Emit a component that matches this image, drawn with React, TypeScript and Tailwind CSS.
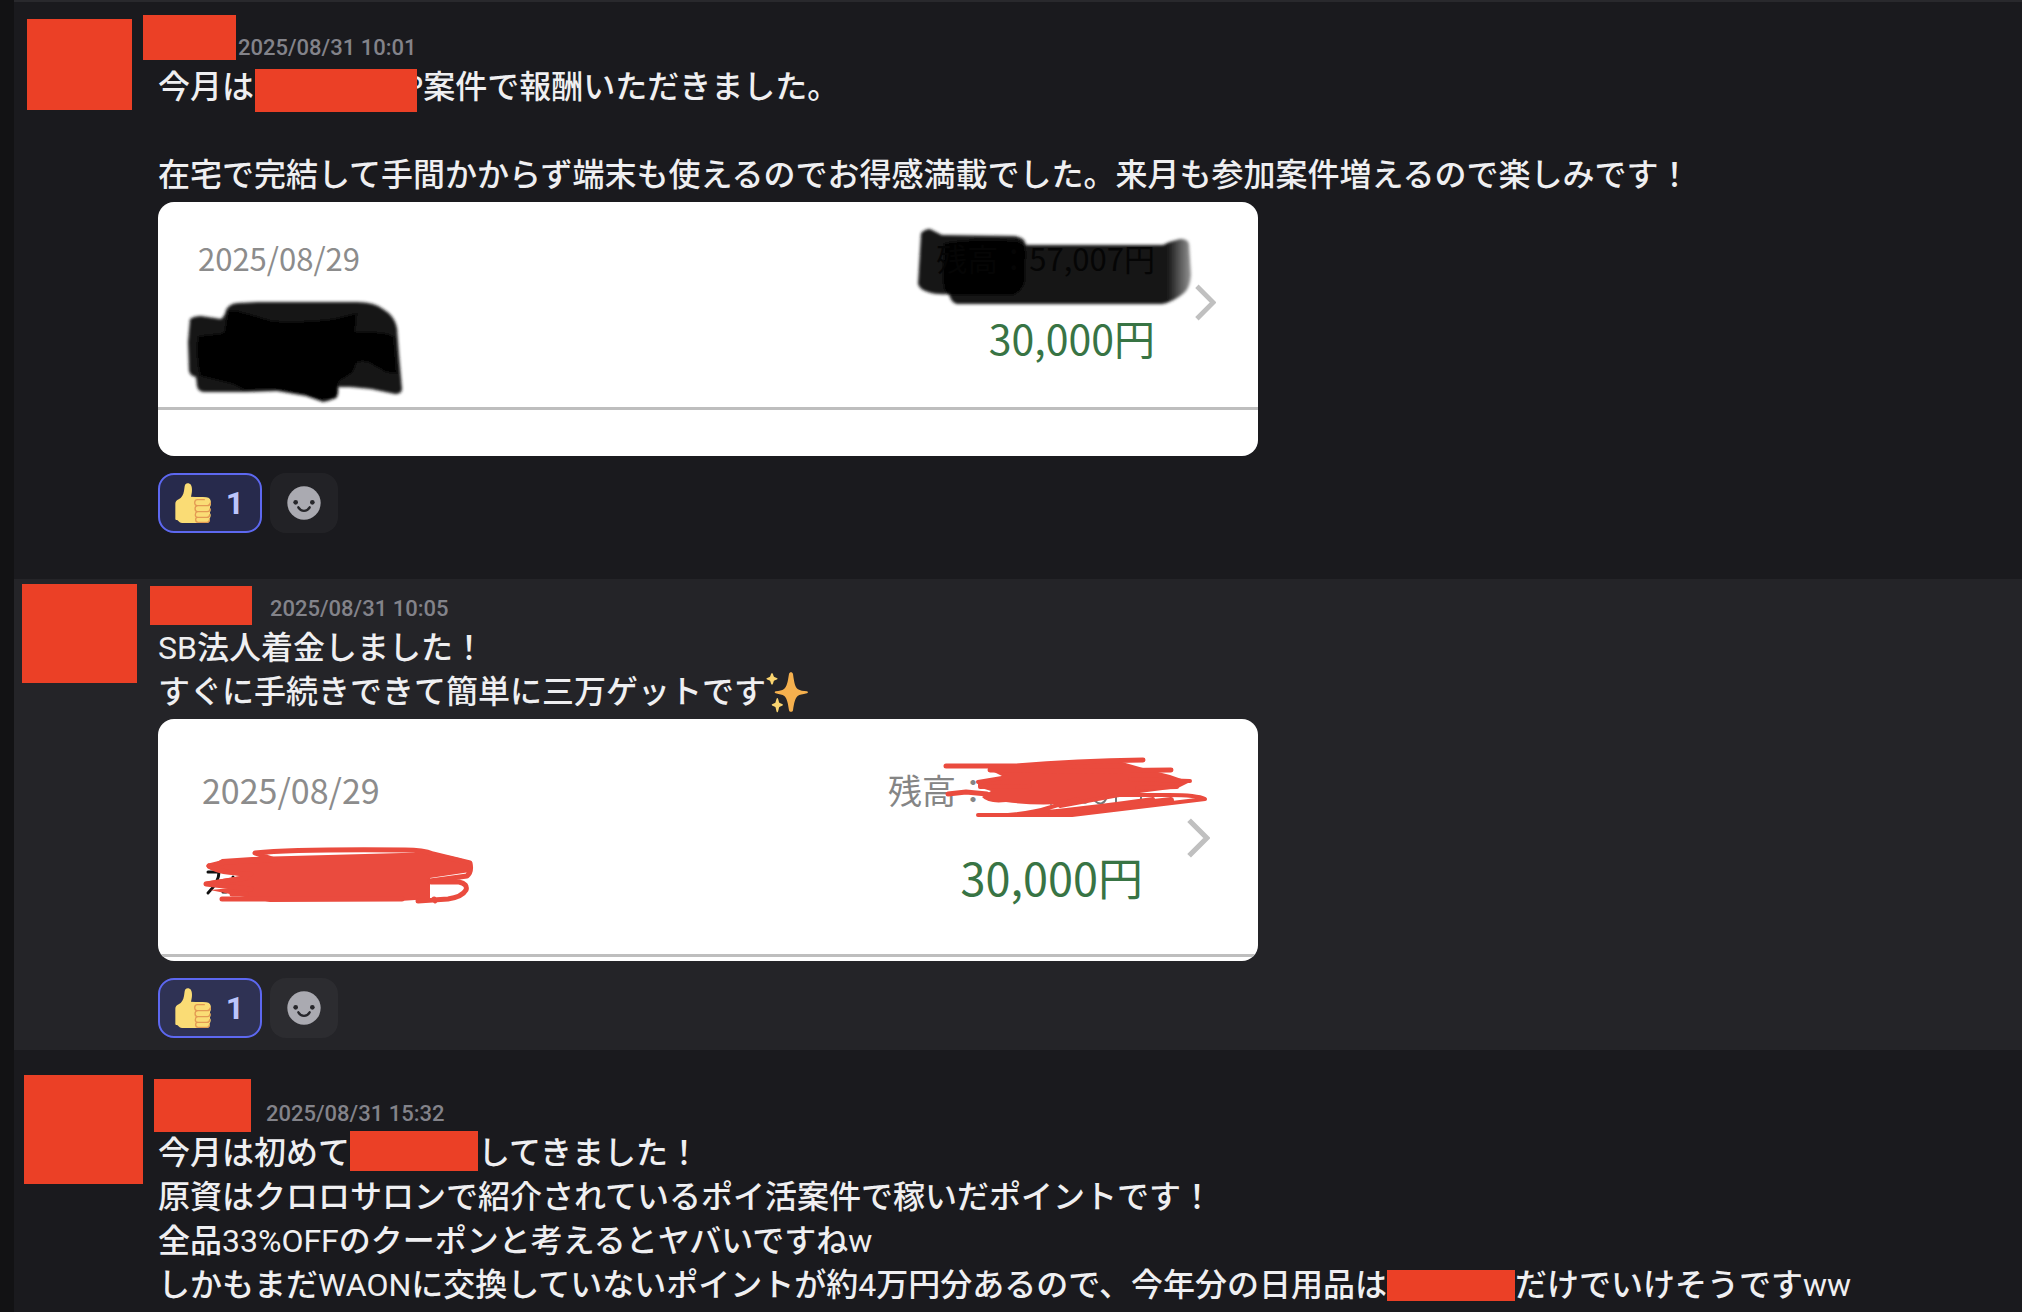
import React from 'react';
import clsx from 'clsx';

interface MessageProps {
  time: string;
  timeClass: string;
  avatarClass: string;
  nameClass: string;
  highlighted?: boolean;
  children: React.ReactNode;
}

// Opaque block hiding private information
const Mask: React.FC<{ className: string }> = ({ className }) => (
  <span aria-hidden="true" className={clsx('block shrink-0 bg-[#eb4026]', className)} />
);

const Message: React.FC<MessageProps> = ({ time, timeClass, avatarClass, nameClass, highlighted, children }) => {
  return (
    <article className={clsx('relative pb-3 pl-36 pr-12', highlighted && 'bg-[#242428]')}>
      <Mask className={clsx('absolute', avatarClass)} />
      <Mask className={clsx('absolute', nameClass)} />
      <header className={clsx('flex h-[47px] items-center pt-3', timeClass)}>
        <time className="text-[22px] font-medium leading-8 text-[#83838a]">{time}</time>
      </header>
      {children}
    </article>
  );
};

const Line: React.FC<{ children?: React.ReactNode }> = ({ children }) => (
  <p className="flex h-11 items-center whitespace-nowrap text-[32px] leading-[44px] text-[#efeff1]">{children}</p>
);

const ThumbsUp = () => (
  <svg width="36" height="40" viewBox="0 0 108 120" aria-hidden="true">
    <path
      fill="#fadc75"
      d="M38 1c-5 0-8 3-9 9l-2 14c-2 12-7 20-16 25C5 52 1 56 1 62v45c0 3 2 4 5 4 4 0 6 9 15 9h74c7 0 10-5 9-12-1-2 4-6 3-12 0-4-3-5-2-8 2-4 3-9 0-13-1-3 3-6 3-14 0-11-4-17-14-18-13-2-28-1-46-2 1-5 3-12 3-21 0-13-5-19-13-19z"
    />
    <g fill="none" stroke="#e39a53" strokeWidth="4" strokeLinecap="round" strokeLinejoin="round">
      <path d="M88 50H67c-10 0-11 18 0 18h30c5 0 8-4 9-8" />
      <path d="M67 68c-9 2-9 17 0 18h30c5 0 8-3 8-8" />
      <path d="M67 86c-8 2-8 16 0 17h28c6 0 9-3 9-8" />
      <path d="M67 103c-7 1-7 14 2 15h26c5 0 8-3 8-7" />
    </g>
  </svg>
);

const Smiley = () => (
  <svg width="34" height="34" viewBox="0 0 102 102" aria-hidden="true">
    <circle cx="51" cy="51" r="50" fill="#aaaab1" />
    <g fill="#27272b">
      <circle cx="26" cy="49" r="7" />
      <circle cx="76" cy="49" r="7" />
    </g>
    <path d="M34 64c8 14 26 14 34 0" fill="none" stroke="#27272b" strokeWidth="7" strokeLinecap="round" />
  </svg>
);

const Sparkles = () => (
  <svg width="44" height="44" viewBox="0 0 132 132" role="img" aria-label="✨" className="shrink-0">
    <path
      fill="#f5b04e"
      d="M75 7c3 0 5 2 6 5 4 30 7 40 15 46 6 4 15 5 27 6 4 1 4 5 0 6-14 3-22 4-28 8-8 7-11 22-14 43-1 6-11 6-12 0-3-21-6-36-14-43-6-4-14-5-26-8-4-1-4-5 0-6 11-1 19-3 25-7 9-7 11-21 15-45 1-3 3-5 6-5z"
    />
    <path
      fill="#fad470"
      d="M18 9c3 0 4 8 6 11 3 3 11 3 11 6s-8 3-11 6c-2 3-3 12-6 12s-4-9-6-12c-3-3-11-3-11-6s8-3 11-6c2-3 3-11 6-11zM34 84c3 0 4 11 6 14 3 3 11 3 11 6s-8 4-11 7c-2 3-3 16-6 16s-4-13-6-16c-3-3-11-4-11-7s8-3 11-6c2-3 3-14 6-14z"
    />
  </svg>
);

const Reactions = () => (
  <div className="mt-[17px] flex gap-2">
    <button
      type="button"
      aria-label="リアクション 1"
      className="flex h-[60px] w-[104px] items-center justify-between rounded-2xl border-2 border-[#5d68f0] bg-[#5865f2]/22 pl-[15px] pr-4"
    >
      <ThumbsUp />
      <span className="text-[32px] font-bold leading-10 text-[#bcc5fb]">1</span>
    </button>
    <button
      type="button"
      aria-label="リアクションを付ける"
      className="flex h-[60px] w-[68px] items-center justify-center rounded-2xl bg-white/4"
    >
      <Smiley />
    </button>
  </div>
);

const Chevron: React.FC<{ className: string }> = ({ className }) => (
  <svg viewBox="0 0 22 38" className={className} fill="none" stroke="#c0c0c0" strokeWidth="5" aria-hidden="true">
    <path d="M2 2l17 17L2 36" />
  </svg>
);

const BlackScribble = () => (
  <svg viewBox="0 0 1100 254" className="absolute inset-0 size-full" aria-hidden="true">
    <defs>
      <filter id="soft" x="-5%" y="-5%" width="110%" height="110%">
        <feGaussianBlur stdDeviation="1.8" />
      </filter>
      <linearGradient id="fade" gradientUnits="userSpaceOnUse" x1="760" y1="0" x2="1034" y2="0">
        <stop offset="0" stopColor="#141414" />
        <stop offset="0.91" stopColor="#141414" />
        <stop offset="1" stopColor="#9a9a9a" />
      </linearGradient>
    </defs>
    <g filter="url(#soft)">
      <path
        fill="#161616"
        d="M32 117q4-3 11-3l20 3q4-3 5-9 4-7 12-7l20-1h99q17 0 26 7 12 7 14 19l2 27 3 34q0 5-7 5l-24-5-21-2h-12q1 8-2 11-7 3-13 4l-17-6-29-5-31 1H47q-7 0-8-6l-1-9q-6-1-7-6l-1-29z"
      />
      <path
        fill="#000"
        d="M70 109h10l35 10q30 2 60-2l24-6-2 19q28-1 39 4l3 38-12-2-18-10q-12-2-12 6-4 8-16 13l-3 17-15 2-17-6-29-5-31 1-12-6-32-8q-5-20-2-40l26-3z"
      />
    </g>
    <g filter="url(#soft)">
      <path
        fill="url(#fade)"
        d="M763 31q4-4 9-4l12 6 72 1q11 1 12 9h137q8-4 17-6 8 0 9 5l2 31q-1 13-7 18-11 9-22 11H799q-6-1-8-10-13 1-21-2-9-3-10-8z"
      />
      <path fill="#000" fillOpacity="0.85" d="M786 41q35-6 75-2 7 3 7 12l-1 28q-3 12-12 14h-64q-8-3-6-30z" />
    </g>
  </svg>
);

const RedScribble = () => (
  <svg
    viewBox="0 0 1100 242"
    className="absolute inset-0 size-full"
    fill="none"
    strokeLinecap="round"
    strokeLinejoin="round"
    aria-hidden="true"
  >
    <g stroke="#111" strokeWidth="3">
      <path d="M50 153h11q0 10-11 21M65 173h3M75 158v3M87 175l2-3" />
    </g>
    <g stroke="#777" strokeWidth="2">
      <path d="M922 82q6 4 9-1M937 82q7 6 11-2M958 77v8M983 77v7M893 85l2-3" />
    </g>
    <path
      fill="#ea4b3e"
      d="M64 140l30-2 150-4q40-2 70 9l-2 10-40 6v21l-30 2-130 1-60-12 32-3-38-5 36-6-33-8z"
    />
    <g stroke="#ea4b3e" strokeWidth="5">
      <path d="M51 147l16-4 50-2-20-7q40-4 150-3 18 0 28 4l37 9q2 9-3 13l-37 5" />
      <path d="M51 147q9 7 42 8M48 165l40-6M48 165l45 5M64 180l180 0" />
      <path d="M273 163h28q9 2 7 8-4 7-18 9l-30 2M276 180l1 2M88 175l-14 0" />
    </g>
    <path
      fill="#ea4b3e"
      d="M820 64q10-6 28-5l-14-7 66-8 64-1 28 8 20 5 20 7-12 6-31 4-37 5-30 5q-36 5-74 0-18 2-24-5l9-6-13-4z"
    />
    <g stroke="#ea4b3e" strokeWidth="4">
      <path d="M788 47l70 0q60-5 127-6M832 51l90 1 91-1M790 75l18-2 21 2" strokeWidth="5" />
      <path d="M820 63l30-5M822 68l50-1M1032 62l-60-2M1019 68l-40 1" />
      <path d="M820 96h94l133-16q-8-4-36-4h-50l-59 11" />
      <path d="M850 96q25-2 40-7l30-9M880 94q60-6 115-14" />
      <path d="M893 95l120-14" strokeWidth="6" />
    </g>
  </svg>
);

export default function App() {
  return (
    <main
      lang="ja"
      className="min-h-screen overflow-hidden border-l-[14px] border-[#121214] bg-[#1a1a1e] font-['Roboto','Noto_Sans_CJK_JP_Medium','Noto_Sans_CJK_JP',sans-serif]"
    >
      <div className="h-[18px] border-t-2 border-[#29292d]" />
      <div className="flex flex-col gap-[34px]">
        <Message
          time="2025/08/31 10:01"
          timeClass="pl-20"
          avatarClass="left-[13px] top-px h-[91px] w-[105px]"
          nameClass="left-[129px] -top-[3px] h-[45px] w-[93px]"
        >
          <Line>
            今月は
            <Mask className="z-10 -mr-[14px] mt-1 ml-px h-[43px] w-[162px] self-start" />
            P案件で報酬いただきました。
          </Line>
          <Line />
          <Line>在宅で完結して手間かからず端末も使えるのでお得感満載でした。来月も参加案件増えるので楽しみです！</Line>
          <section className="relative mt-[5px] w-full max-w-[1100px] overflow-hidden rounded-2xl bg-white pb-[46px] font-['Noto_Sans_CJK_JP',sans-serif]">
            <BlackScribble />
            <div className="flex h-[208px] justify-between border-b-[3px] border-[#bebebe] pl-10 pr-[42px]">
              <time className="pt-8 text-[31px] leading-[48px] text-[#8c8c8c]">2025/08/29</time>
              <div className="flex gap-10">
                <div className="relative flex flex-col items-end pt-8">
                  <span className="text-[31px] leading-[48px] text-[#050505]">残高：57,007円</span>
                  <span className="mt-6 text-[41px] leading-[62px] text-[#387444]">30,000円</span>
                </div>
                <Chevron className="mt-[82px] h-[37px] w-[21px]" />
              </div>
            </div>
          </section>
          <Reactions />
        </Message>

        <Message
          highlighted
          time="2025/08/31 10:05"
          timeClass="pl-28"
          avatarClass="left-2 top-[5px] h-[99px] w-[115px]"
          nameClass="left-[136px] top-[7px] h-[39px] w-[102px]"
        >
          <Line>SB法人着金しました！</Line>
          <Line>
            すぐに手続きできて簡単に三万ゲットです
            <Sparkles />
          </Line>
          <section className="relative mt-[5px] w-full max-w-[1100px] overflow-hidden rounded-2xl bg-white pb-1 font-['Noto_Sans_CJK_JP',sans-serif]">
            <div className="flex h-[238px] justify-between border-b-[3px] border-[#bebebe] pl-11 pr-12">
              <time className="pt-[47px] text-[34px] leading-[48px] text-[#8c8c8c]">2025/08/29</time>
              <div className="flex gap-11">
                <div className="flex w-[255px] flex-col pt-[47px]">
                  <span className="text-[34px] leading-[48px] text-[#858585]">残高：</span>
                  <span className="mt-8 self-end text-[45px] leading-[62px] text-[#387444]">30,000円</span>
                </div>
                <Chevron className="mt-[99px] h-10 w-[23px]" />
              </div>
            </div>
            <RedScribble />
          </section>
          <Reactions />
        </Message>

        <Message
          time="2025/08/31 15:32"
          timeClass="pl-[108px]"
          avatarClass="left-[10px] -top-[9px] h-[109px] w-[119px]"
          nameClass="left-[140px] -top-[5px] h-[53px] w-[97px]"
        >
          <Line>
            今月は初めて
            <Mask className="h-10 w-32 self-start" />
            してきました！
          </Line>
          <Line>原資はクロロサロンで紹介されているポイ活案件で稼いだポイントです！</Line>
          <Line>全品33%OFFのクーポンと考えるとヤバいですねw</Line>
          <Line>
            しかもまだWAONに交換していないポイントが約4万円分あるので、今年分の日用品は
            <Mask className="h-[31px] w-32" />
            だけでいけそうですww
          </Line>
        </Message>
      </div>
    </main>
  );
}
